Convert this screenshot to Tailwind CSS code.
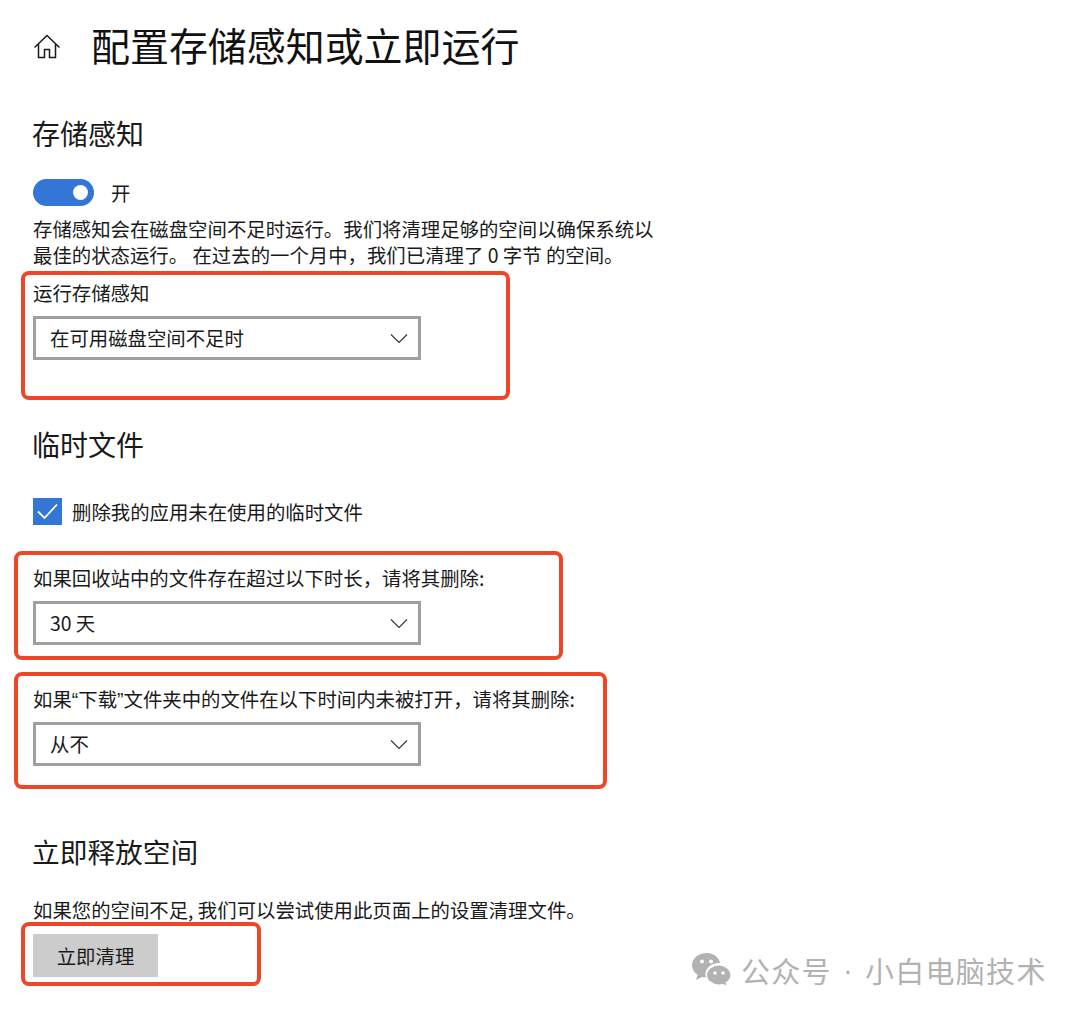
<!DOCTYPE html>
<html lang="zh-CN">
<head>
  <meta charset="UTF-8">
  <title>配置存储感知或立即运行</title>
  <script src="https://cdn.jsdelivr.net/npm/@tailwindcss/browser@4"></script>
</head>
<body class="bg-white font-['Noto_Sans_CJK_SC','Noto_Sans',sans-serif] text-[#1a1a1a]">
  <main class="relative w-[1080px] h-[1015px] overflow-hidden pl-[33px] pt-[22px]">
    <!-- Header -->
    <div class="flex items-center h-[50px]">
      <svg class="w-[28px] h-[28px]" viewBox="0 0 28 28" fill="none" stroke="#1a1a1a" stroke-width="1.500">
        <path d="M1.500 14.500 14 2.500l12.500 12M5.500 11v13.500h6v-8h5v8h6V11"/>
      </svg>
      <h1 class="ml-[30px] mb-[6px] text-[38.950px] leading-[50px] text-[#111]">配置存储感知或立即运行</h1>
    </div>

    <!-- 存储感知 -->
    <h2 class="mt-[39px] -ml-px text-[28px] leading-[44px]">存储感知</h2>
    <div class="mt-[24px] flex items-center h-[27px]">
      <span class="flex items-center justify-end w-[61px] h-[27px] pr-[6px] rounded-full bg-[#3476d6]">
        <span class="block w-[15px] h-[15px] rounded-full bg-white"></span>
      </span>
      <span class="ml-[17px] text-[19.400px] leading-[27px]">开</span>
    </div>
    <p class="mt-[10px] text-[19.400px] leading-[26px]">存储感知会在磁盘空间不足时运行。我们将清理足够的空间以确保系统以<br>最佳的状态运行。 在过去的一个月中，我们已清理了 0 字节 的空间。</p>

    <p class="mt-[12px] text-[19.400px] leading-[26px]">运行存储感知</p>
    <div class="mt-[10px] flex items-center justify-between w-[388px] h-[44px] pl-[14px] pr-[10px] border-[3px] border-[#a0a0a0] text-[19.400px]">
      <span>在可用磁盘空间不足时</span>
      <svg class="w-[18px] h-[11px]" viewBox="0 0 18 11" fill="none" stroke="#333" stroke-width="1.100"><path d="M1 1.500 9 9.500l8-8"/></svg>
    </div>

    <!-- 临时文件 -->
    <h2 class="mt-[62px] -ml-px text-[28px] leading-[44px]">临时文件</h2>
    <div class="mt-[32px] flex items-center h-[27px]">
      <span class="flex items-center justify-center w-[29px] h-[27px] bg-[#3476d6]">
        <svg class="w-[23px] h-[19px]" viewBox="0 0 23 19" fill="none" stroke="#fff" stroke-width="1.800"><path d="M2 9.500 8.500 16 21 2.500"/></svg>
      </span>
      <span class="ml-[10px] text-[19.400px] leading-[27px]">删除我的应用未在使用的临时文件</span>
    </div>

    <p class="mt-[40px] text-[19.400px] leading-[26px]">如果回收站中的文件存在超过以下时长，请将其删除:</p>
    <div class="mt-[10px] flex items-center justify-between w-[388px] h-[44px] pl-[14px] pr-[10px] border-[3px] border-[#a0a0a0] text-[19.400px]">
      <span>30 天</span>
      <svg class="w-[18px] h-[11px]" viewBox="0 0 18 11" fill="none" stroke="#333" stroke-width="1.100"><path d="M1 1.500 9 9.500l8-8"/></svg>
    </div>

    <p class="mt-[41px] text-[19.400px] leading-[26px]">如果<span class="font-['Liberation_Sans']">“</span>下载<span class="font-['Liberation_Sans']">”</span>文件夹中的文件在以下时间内未被打开，请将其删除:</p>
    <div class="mt-[9px] flex items-center justify-between w-[388px] h-[44px] pl-[14px] pr-[10px] border-[3px] border-[#a0a0a0] text-[19.400px]">
      <span>从不</span>
      <svg class="w-[18px] h-[11px]" viewBox="0 0 18 11" fill="none" stroke="#333" stroke-width="1.100"><path d="M1 1.500 9 9.500l8-8"/></svg>
    </div>

    <!-- 立即释放空间 -->
    <h2 class="mt-[63px] -ml-px text-[27.700px] leading-[44px]">立即释放空间</h2>
    <p class="mt-[24px] text-[19.400px] leading-[26px]">如果您的空间不足, 我们可以尝试使用此页面上的设置清理文件。</p>
    <button class="mt-[11px] block w-[125px] h-[43px] bg-[#cccccc] text-[19.400px] text-center">立即清理</button>

    <!-- Red annotation boxes -->
    <div class="absolute left-[21px] top-[271px] w-[489px] h-[129px] rounded-[8px] border-[4px] border-[#ef4528]"></div>
    <div class="absolute left-[14px] top-[551px] w-[549px] h-[109px] rounded-[8px] border-[4px] border-[#ef4528]"></div>
    <div class="absolute left-[14px] top-[672px] w-[593px] h-[117px] rounded-[8px] border-[4px] border-[#ef4528]"></div>
    <div class="absolute left-[21px] top-[922px] w-[240px] h-[64px] rounded-[8px] border-[4px] border-[#ef4528]"></div>

    <!-- Watermark -->
    <div class="absolute left-[691px] top-[950px] flex items-center text-[#b2b2b2]">
      <svg class="w-[42px] h-[36px]" viewBox="0 0 42 36" fill="#b2b2b2">
        <path d="M16 1C7.700 1 1 6.500 1 13.300c0 3.900 2.200 7.300 5.700 9.500L5 28l6.100-3.100c1.200.3 2.500.5 3.800.5-.3-1-.5-2-.5-3.100 0-6.300 6-11.400 13.500-11.400h1.200C27.800 5.200 22.400 1 16 1Z"/>
        <path d="M28 13c-6.900 0-12.500 4.500-12.500 10S21.100 33 28 33c1.300 0 2.600-.2 3.800-.5l4.700 2.500-1.300-4.200c3-1.900 4.800-4.700 4.800-7.800 0-5.500-5.600-10-12-10Z" stroke="#fff" stroke-width="1.200"/>
        <circle cx="11" cy="9.500" r="2" fill="#fff"/><circle cx="20" cy="9.500" r="2" fill="#fff"/>
        <circle cx="24" cy="21" r="1.700" fill="#fff"/><circle cx="32" cy="21" r="1.700" fill="#fff"/>
      </svg>
      <span class="ml-[8px] flex text-[29px] leading-[40px] tracking-[1.300px] whitespace-nowrap">
        <span>公众号</span>
        <span class="w-[33px] text-center font-['Liberation_Sans']">·</span>
        <span>小白电脑技术</span>
      </span>
    </div>
  </main>
</body>
</html>
